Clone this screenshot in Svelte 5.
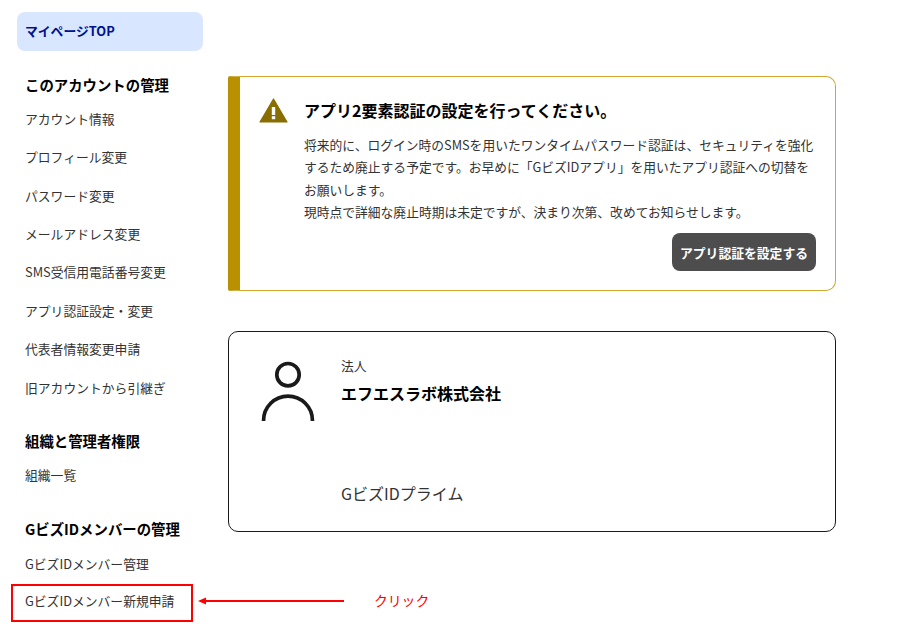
<script lang="ts">
    const accountLinks = [
        'アカウント情報',
        'プロフィール変更',
        'パスワード変更',
        'メールアドレス変更',
        'SMS受信用電話番号変更',
        'アプリ認証設定・変更',
        '代表者情報変更申請',
        '旧アカウントから引継ぎ'
    ];
</script>

<div class="page">
    <nav class="sidebar">
        <a class="top-link" href="#top">マイページTOP</a>

        <h2 class="first">このアカウントの管理</h2>
        <ul class="first-list">
            {#each accountLinks as link}
                <li>{link}</li>
            {/each}
        </ul>

        <h2>組織と管理者権限</h2>
        <ul>
            <li>組織一覧</li>
        </ul>

        <h2>GビズIDメンバーの管理</h2>
        <ul class="last-list">
            <li>GビズIDメンバー管理</li>
            <li class="marked">GビズIDメンバー新規申請</li>
        </ul>
    </nav>

    <main class="content">
        <section class="alert">
            <svg class="warn" viewBox="0 0 29 25" aria-hidden="true">
                <path d="M14.5 1 L28 24 H1 Z" fill="#8a6d00" stroke="#8a6d00" stroke-width="1.2" stroke-linejoin="round" />
                <rect x="12.8" y="9" width="3.4" height="8" fill="#fff" />
                <rect x="12.8" y="18.2" width="3.4" height="3" fill="#fff" />
            </svg>
            <div class="alert-body">
                <h1>アプリ2要素認証の設定を行ってください。</h1>
                <p>将来的に、ログイン時のSMSを用いたワンタイムパスワード認証は、セキュリティを強化するため廃止する予定です。お早めに「GビズIDアプリ」を用いたアプリ認証への切替をお願いします。<br />現時点で詳細な廃止時期は未定ですが、決まり次第、改めてお知らせします。</p>
                <div class="actions">
                    <button>アプリ認証を設定する</button>
                </div>
            </div>
        </section>

        <section class="account">
            <svg class="person" viewBox="0 0 54 62" aria-hidden="true">
                <circle cx="27" cy="13.7" r="11.2" fill="none" stroke="#1a1a1a" stroke-width="3.7" />
                <path d="M2.55 60 V59.6 A24.45 24.45 0 0 1 51.45 59.6 V60" fill="none" stroke="#1a1a1a" stroke-width="3.7" />
            </svg>
            <div class="account-info">
                <div class="kind">法人</div>
                <div class="name">エフエスラボ株式会社</div>
                <div class="plan">GビズIDプライム</div>
            </div>
        </section>
    </main>

    <div class="callout">
        <svg viewBox="0 0 146 10" aria-hidden="true">
            <path d="M0 5 L8 1.5 V4 H146 V6 H8 V8.5 Z" fill="#f00" />
        </svg>
        <span>クリック</span>
    </div>
</div>

<style>
    :global(body) {
        background: #fff;
    }

    .page {
        position: relative;
        display: flex;
        width: 924px;
        height: 630px;
        overflow: hidden;
        font-family: "Noto Sans CJK JP", "Noto Sans", sans-serif;
        color: #1a1a1a;
    }

    .sidebar {
        width: 228px;
        flex: none;
        padding: 12px 0 0 17px;
        box-sizing: border-box;
    }

    .top-link {
        display: block;
        width: 186px;
        height: 39px;
        box-sizing: border-box;
        padding-left: 8px;
        line-height: 38px;
        background: #d9e6ff;
        border-radius: 8px;
        color: #00118f;
        font-size: 12.8px;
        font-weight: 700;
        text-decoration: none;
    }

    h2 {
        margin: 15px 0 0 8px;
        font-size: 14.4px;
        line-height: 22px;
        font-weight: 700;
        color: #000;
    }

    h2.first {
        margin-top: 23px;
    }

    ul {
        list-style: none;
        margin: 0;
        padding: 12px 0 0 8px;
    }

    ul.first-list {
        padding-bottom: 0.2px;
        padding-top: 11.8px;
    }

    ul.last-list {
        padding-top: 13px;
    }

    li {
        font-size: 12.8px;
        line-height: 20px;
        height: 38.4px;
        padding-top: 1px;
        box-sizing: border-box;
        color: #333;
    }

    .marked {
        position: relative;
        top: -1px;
    }

    .marked::after {
        content: "";
        position: absolute;
        left: -14px;
        top: -6px;
        width: 182px;
        height: 38px;
        border: 2px solid #f00;
        box-sizing: border-box;
    }

    .content {
        width: 608px;
        padding-top: 76px;
    }

    .alert {
        display: flex;
        box-sizing: border-box;
        height: 215px;
        padding: 20px 19px 0 19px;
        gap: 16px;
        border: 1px solid #cfa92f;
        border-left: 12px solid #b89000;
        border-radius: 2px 10px 10px 2px;
    }

    .warn {
        width: 29px;
        height: 25px;
        flex: none;
        margin-top: 1px;
    }

    .alert-body {
        flex: 1;
    }

    h1 {
        margin: 0;
        font-size: 16px;
        line-height: 26px;
        font-weight: 700;
        color: #000;
    }

    p {
        margin: 11px 0 0;
        font-size: 12.77px;
        line-height: 22.4px;
        color: #333;
    }

    .actions {
        display: flex;
        justify-content: flex-end;
        margin-top: 9.8px;
    }

    button {
        width: 144px;
        height: 38px;
        padding: 0;
        border: none;
        border-radius: 8px;
        background: #4d4d4d;
        color: #fff;
        font-family: inherit;
        font-size: 12.8px;
        font-weight: 700;
    }

    .account {
        display: flex;
        box-sizing: border-box;
        height: 201px;
        margin-top: 40px;
        padding: 29px 0 0 32px;
        gap: 26px;
        border: 1px solid #1a1a1a;
        border-radius: 10px;
    }

    .person {
        width: 54px;
        height: 62px;
        flex: none;
    }

    .kind {
        font-size: 12.8px;
        line-height: 14px;
        margin-top: -2px;
        color: #333;
    }

    .name {
        margin-top: 9px;
        font-size: 16px;
        line-height: 22px;
        font-weight: 700;
        color: #000;
    }

    .plan {
        margin-top: 78px;
        font-size: 16px;
        line-height: 22px;
        color: #333;
    }

    .callout {
        position: absolute;
        left: 198px;
        top: 590px;
        display: flex;
        align-items: center;
        gap: 30px;
        height: 22px;
        color: #f00;
        font-size: 13.8px;
    }

    .callout svg {
        width: 146px;
        height: 10px;
    }

    .callout span {
        margin-top: -2px;
    }
</style>
